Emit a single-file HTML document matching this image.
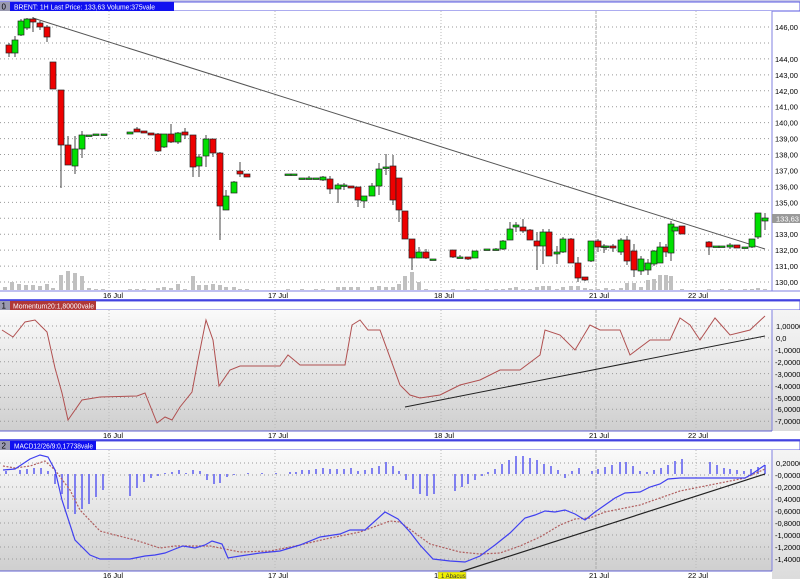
<!DOCTYPE html>
<html><head><meta charset="utf-8"><style>
html,body{margin:0;padding:0;background:#fff;}
svg{display:block;font-family:"Liberation Sans",Arial,sans-serif;}
</style></head><body>
<svg id="s" width="800" height="579" viewBox="0 0 800 579" xmlns="http://www.w3.org/2000/svg">
<defs>
<linearGradient id="g" x1="0" y1="0" x2="0" y2="1"><stop offset="0" stop-color="#fafafa"/><stop offset="1" stop-color="#cfcfcf"/></linearGradient>
<linearGradient id="ga" x1="0" y1="0" x2="0" y2="1"><stop offset="0" stop-color="#f4f4f4"/><stop offset="1" stop-color="#dcdcdc"/></linearGradient>
</defs>
<rect width="800" height="579" fill="#fff"/>
<rect x="0" y="0" width="800" height="2" fill="#c8c8e8"/>
<rect x="0" y="2" width="800" height="9" fill="#fff" stroke="#5858e0" stroke-width="1"/>
<rect x="0" y="2" width="10" height="9" fill="#9a9ab0"/>
<text x="1.5" y="9.5" font-size="8" fill="#000">0</text>
<rect x="10" y="2" width="164" height="9" fill="#1010f0"/>
<text x="14" y="9.3" font-size="7" fill="#fff" textLength="141" lengthAdjust="spacingAndGlyphs">BRENT: 1H Last Price: 133,63 Volume:375vale</text>
<rect x="0" y="11" width="772" height="280" fill="#fff"/>
<line x1="772" y1="11" x2="772" y2="291" stroke="#8080e0"/>
<line x1="0" y1="291" x2="800" y2="291" stroke="#8080e0"/>
<g id="p1grid"></g>
<g id="vol"></g>
<line x1="33" y1="18" x2="765" y2="249" stroke="#555" stroke-width="1"/>
<g id="candles"></g>
<g font-size="7.5" fill="#000" id="pax"></g>
<rect x="772" y="214" width="28" height="9" fill="#999"/>
<text x="776" y="221.5" font-size="7.5" fill="#fff">133,63</text>
<g font-size="7.5" fill="#000">
<text x="103" y="298">16 Jul</text><text x="268" y="298">17 Jul</text><text x="434" y="298">18 Jul</text><text x="589" y="298">21 Jul</text><text x="688" y="298">22 Jul</text>
</g>
<line x1="0" y1="300" x2="800" y2="300" stroke="#3030e0" stroke-width="1.5"/>
<rect x="0" y="301" width="800" height="9" fill="#fff" stroke="#5858e0" stroke-width="1"/>
<rect x="0" y="301" width="10" height="9" fill="#9a9ab0"/>
<text x="1.5" y="308.5" font-size="8" fill="#000">1</text>
<rect x="10" y="301" width="86" height="9" fill="#b03838"/>
<text x="13" y="308.3" font-size="7" fill="#fff" textLength="81" lengthAdjust="spacingAndGlyphs">Momentum20:1,80000vale</text>
<rect x="0" y="310" width="772" height="121" fill="url(#g)"/>
<rect x="772" y="310" width="28" height="121" fill="url(#ga)"/>
<line x1="772" y1="310" x2="772" y2="431" stroke="#8080e0"/>
<line x1="0" y1="431" x2="772" y2="431" stroke="#6060d0"/>
<g id="p2grid"></g>
<polyline id="mom" fill="none" stroke="#b05050" stroke-width="1"/>
<line x1="405" y1="407" x2="765" y2="336" stroke="#222" stroke-width="1"/>
<g font-size="7.5" fill="#000">
<text x="776" y="329">1,00000</text><text x="776" y="341">0,0</text><text x="775" y="353">-1,00000</text><text x="775" y="365">-2,00000</text><text x="775" y="377">-3,00000</text><text x="775" y="389">-4,00000</text><text x="775" y="401">-5,00000</text><text x="775" y="412">-6,00000</text><text x="775" y="424">-7,00000</text>
<text x="103" y="438">16 Jul</text><text x="268" y="438">17 Jul</text><text x="434" y="438">18 Jul</text><text x="589" y="438">21 Jul</text><text x="688" y="438">22 Jul</text>
</g>
<line x1="0" y1="440" x2="800" y2="440" stroke="#3030e0" stroke-width="1.5"/>
<rect x="0" y="441" width="800" height="9" fill="#fff" stroke="#5858e0" stroke-width="1"/>
<rect x="0" y="441" width="10" height="9" fill="#9a9ab0"/>
<text x="1.5" y="448.5" font-size="8" fill="#000">2</text>
<rect x="10" y="441" width="86" height="9" fill="#1010f0"/>
<text x="14" y="448.3" font-size="7" fill="#fff" textLength="79" lengthAdjust="spacingAndGlyphs">MACD12/26/9:0,17738vale</text>
<rect x="0" y="450" width="772" height="121" fill="url(#g)"/>
<rect x="772" y="450" width="28" height="129" fill="url(#ga)"/>
<line x1="772" y1="450" x2="772" y2="571" stroke="#8080e0"/>
<line x1="0" y1="571" x2="772" y2="571" stroke="#6060d0"/>
<g id="p3grid"></g>
<g id="hist"></g>
<polyline id="sig" fill="none" stroke="#b06060" stroke-width="1.2" stroke-dasharray="2,1.5"/>
<polyline id="macd" fill="none" stroke="#4040f0" stroke-width="1.2"/>
<line x1="460" y1="572" x2="765" y2="474" stroke="#222" stroke-width="1.2"/>
<g font-size="7.5" fill="#000">
<text x="776" y="466">0,20000</text><text x="775" y="478">-0,00000</text><text x="775" y="490">-0,20000</text><text x="775" y="502">-0,40000</text><text x="775" y="514">-0,60000</text><text x="775" y="526">-0,80000</text><text x="775" y="538">-1,00000</text><text x="775" y="550">-1,20000</text><text x="775" y="562">-1,40000</text>
<text x="103" y="578">16 Jul</text><text x="268" y="578">17 Jul</text><text x="434" y="578">18 Jul</text><text x="589" y="578">21 Jul</text><text x="688" y="578">22 Jul</text>
</g>
<rect x="438" y="572" width="28" height="7" fill="#f0f000" stroke="#999" stroke-width="0.5"/>
<text x="441" y="578" font-size="6" fill="#333">1 Abacus</text>
</svg>
<script>
var NS="http://www.w3.org/2000/svg";
function el(p,t,a){var e=document.createElementNS(NS,t);for(var k in a)e.setAttribute(k,a[k]);document.getElementById(p).appendChild(e);return e;}
var vx=[109,275,441,596,696];
function grid(id,ys,y0,y1){ys.forEach(function(y){el(id,"line",{x1:0,y1:y,x2:772,y2:y,stroke:"#999","stroke-dasharray":"1,3"});});
vx.forEach(function(x){el(id,"line",{x1:x,y1:y0,x2:x,y2:y1,stroke:x==596?"#aaa":"#bbb","stroke-dasharray":x==596?"3,1":"1,2"});});}
var ys1=[];for(var i=0;i<=16;i++)ys1.push(27+i*15.94);
grid("p1grid",ys1,11,291);
var labs=["146,00","144,00","143,00","142,00","141,00","140,00","139,00","138,00","137,00","136,00","135,00","134,00","133,00","132,00","131,00","130,00"];
var ys2=[];for(i=0;i<9;i++)ys2.push(326+i*11.9);grid("p2grid",ys2,310,431);
var ys3=[];for(i=0;i<9;i++)ys3.push(463+i*12);grid("p3grid",ys3,450,571);
var C=[[9,45,53,43,57,'r'],[15,40,53,36,57,'g'],[21,21,35,19,36,'g'],[27,19,28,18,30,'g'],[33,19,22,17,32,'r'],[40,23,27,21,30,'r'],[47,27,37,25,42,'r'],
[53,62,89,62,89,'r'],[61,90,145,90,188,'r'],[68,145,165,136,165,'r'],[75,149,166,136,174,'g'],[82,135,149,131,158,'g'],[89,135,136,135,136,'g'],[96,134,135,134,135,'g'],[104,134,135,134,135,'g'],
[130,132,134,132,134,'g'],[137,129,132,127,132,'r'],[144,131,133,131,133,'r'],[151,133,135,133,135,'r'],[158,134,151,133,152,'r'],[164,134,147,134,148,'g'],[171,134,142,124,143,'r'],[178,133,142,132,144,'g'],[185,132,135,128,139,'r'],
[193,135,167,135,177,'r'],[199,157,166,154,177,'g'],[206,139,156,135,167,'g'],[213,139,153,139,157,'r'],[220,153,206,152,240,'r'],[226,196,210,190,210,'g'],[234,182,193,181,193,'g'],[240,171,174,162,177,'r'],[247,174,177,174,177,'r'],
[288,174,175,174,175,'g'],[294,174,175,174,175,'g'],[302,178,179,178,179,'g'],[309,178,179,176,179,'g'],[316,178,179,178,179,'g'],[323,177,180,176,181,'g'],[330,179,189,176,194,'r'],[338,185,189,183,203,'g'],[344,185,186,183,190,'g'],[351,186,188,186,188,'r'],
[358,187,200,187,207,'r'],[364,196,201,196,208,'g'],[372,186,196,183,196,'g'],[379,169,186,163,195,'g'],[386,167,168,154,175,'g'],[393,166,200,155,205,'r'],[399,178,210,178,222,'r'],[405,211,239,211,239,'r'],[412,239,258,239,270,'r'],[419,252,258,247,258,'g'],[426,252,258,249,259,'r'],[433,259,260,259,260,'g'],
[453,250,257,250,258,'r'],[460,257,258,255,258,'g'],[468,257,259,257,260,'r'],[475,251,258,251,258,'g'],[487,249,250,249,250,'g'],[496,249,250,248,250,'g'],[503,241,249,240,250,'g'],[510,229,240,222,240,'g'],[516,225,227,222,232,'g'],[523,227,231,219,233,'r'],
[530,230,240,229,240,'r'],[537,241,246,232,270,'r'],[543,232,246,229,264,'g'],[549,232,256,229,256,'r'],[557,252,254,246,264,'g'],[563,239,252,237,253,'g'],[571,239,263,238,263,'r'],[578,263,278,257,282,'r'],[585,277,280,277,281,'r'],[591,241,261,241,262,'g'],[598,241,247,239,252,'r'],[604,246,247,244,253,'g'],
[606,246,247,246,250,'g'],[613,246,248,244,252,'r'],[621,240,252,238,255,'g'],[627,240,261,236,265,'r'],[634,251,270,244,277,'r'],[641,259,271,256,275,'g'],[648,263,270,259,275,'g'],[654,251,264,250,266,'g'],[660,247,263,242,263,'g'],[666,247,252,244,257,'r'],[671,224,253,221,261,'g'],[675,227,231,227,231,'g'],[682,226,234,226,234,'r'],
[709,242,247,241,255,'r'],[716,246,247,246,247,'g'],[722,246,247,246,247,'g'],[730,245,247,243,249,'g'],[737,245,248,245,248,'r'],[745,247,248,247,248,'g'],[752,239,247,239,248,'g'],[758,213,237,213,239,'g'],[765,218,221,213,230,'g']];
C.forEach(function(c){el("candles","line",{x1:c[0],y1:c[3],x2:c[0],y2:c[4],stroke:"#444"});
var h=Math.max(c[2]-c[1],1.5);el("candles","rect",{x:c[0]-3,y:c[1],width:6,height:h,fill:c[5]=='g'?"#00e000":"#ee0000",stroke:"#222","stroke-width":0.7});});
var V=[[5,3],[12,8],[19,6],[26,5],[33,5],[40,4],[47,6],[53,2],[61,15],[68,19],[75,17],[82,14],[89,2],[96,1],[103,1],[130,1],[137,1],[144,1],[158,2],[164,3],[171,2],[178,6],[185,1],[193,14],[199,5],[206,5],[213,6],[220,5],[226,3],[234,3],[240,1],[247,1],[288,1],[302,1],[316,1],[323,1],[338,3],[344,3],[351,3],[358,3],[372,3],[379,4],[386,3],[393,3],[399,6],[405,14],[412,18],[419,8],[426,1],[453,1],[468,1],[475,1],[487,1],[496,1],[503,1],[510,2],[516,3],[523,1],[530,1],[537,3],[543,4],[549,4],[557,1],[563,3],[571,4],[578,4],[585,2],[591,1],[598,1],[606,2],[613,1],[621,2],[627,7],[634,7],[641,3],[648,10],[654,11],[660,15],[666,15],[671,14],[682,1],[709,1],[722,1],[730,1],[745,1],[752,1],[758,2],[765,1]];
V.forEach(function(v){el("vol","rect",{x:v[0]-2,y:290-v[1],width:4,height:v[1],fill:"#c0c0c0"});});
labs.forEach(function(l,i){var y=27+(i==0?0:i+1)*15.94;el("pax","text",{x:775,y:y+3}).textContent=l;});
function pts(a){return a.map(function(p){return p.join(",");}).join(" ");}
document.getElementById("mom").setAttribute("points",pts([[2,330],[13,337],[25,322],[35,320],[47,332],[55,368],[62,393],[68,420],[82,400],[100,397],[137,396],[145,393],[157,423],[165,417],[172,420],[180,407],[192,392],[198,360],[206,320],[213,340],[219,386],[230,370],[240,366],[280,366],[288,355],[300,365],[320,365],[345,365],[352,325],[360,320],[368,330],[380,330],[400,385],[410,395],[420,398],[440,395],[460,385],[480,380],[500,370],[520,370],[540,355],[545,330],[560,335],[575,350],[590,325],[600,330],[620,330],[630,355],[650,340],[670,340],[680,318],[690,325],[700,340],[715,318],[730,335],[750,330],[765,316]]));
document.getElementById("macd").setAttribute("points",pts([[3,470],[15,469],[30,459],[40,455],[48,457],[55,470],[62,500],[75,540],[90,555],[100,559],[130,559],[145,556],[155,555],[165,553],[175,549],[183,546],[195,548],[205,545],[212,541],[222,544],[228,558],[240,556],[260,553],[280,551],[300,545],[320,537],[340,534],[350,530],[365,530],[385,512],[398,519],[410,532],[420,545],[433,559],[450,561],[465,562],[480,556],[495,545],[510,533],[525,518],[535,515],[545,511],[555,512],[565,510],[575,514],[585,520],[595,512],[605,505],[615,498],[625,493],[640,492],[650,487],[660,484],[668,479],[680,478],[720,478],[745,478],[752,474],[765,465]]));
document.getElementById("sig").setAttribute("points",pts([[3,466],[15,468],[30,466],[45,461],[55,470],[70,490],[80,510],[100,531],[115,535],[135,540],[160,548],[175,546],[190,546],[210,546],[240,552],[270,551],[300,545],[330,538],[360,532],[390,521],[400,522],[430,544],[460,552],[480,554],[500,553],[520,546],[540,537],[560,525],[575,519],[590,518],[605,512],[620,509],[640,505],[660,498],[680,491],[700,487],[720,483],[745,478],[765,469]]));
var H=[[6,3],[20,4],[27,5],[34,6],[41,6],[48,3],[55,-10],[62,-20],[68,-35],[75,-40],[82,-35],[89,-30],[96,-23],[103,-16],[130,-22],[137,-14],[144,-8],[151,-4],[158,-2],[165,1],[172,2],[179,4],[186,1],[193,4],[200,3],[207,-6],[214,-10],[220,-9],[227,-3],[234,-1],[248,1],[262,1],[276,1],[290,2],[296,2],[302,4],[309,4],[316,5],[323,6],[330,5],[337,5],[344,5],[351,6],[358,3],[365,4],[372,6],[379,8],[386,12],[393,8],[399,3],[406,-6],[413,-15],[420,-20],[427,-22],[434,-20],[455,-17],[462,-13],[468,-10],[475,-6],[482,-2],[488,2],[495,5],[502,10],[509,14],[516,18],[523,18],[530,16],[537,14],[544,10],[551,8],[558,4],[565,-4],[572,3],[579,6],[592,3],[598,5],[605,7],[612,9],[620,12],[626,12],[633,8],[640,3],[647,2],[654,4],[661,6],[668,9],[675,13],[682,15],[710,12],[717,9],[724,6],[730,5],[737,4],[744,3],[751,5],[758,7],[765,9]];
H.forEach(function(h){var z=474;el("hist","line",{x1:h[0],y1:z,x2:h[0],y2:z-h[1],stroke:"#5a5af0","stroke-width":1.5});});
</script>
</body></html>
